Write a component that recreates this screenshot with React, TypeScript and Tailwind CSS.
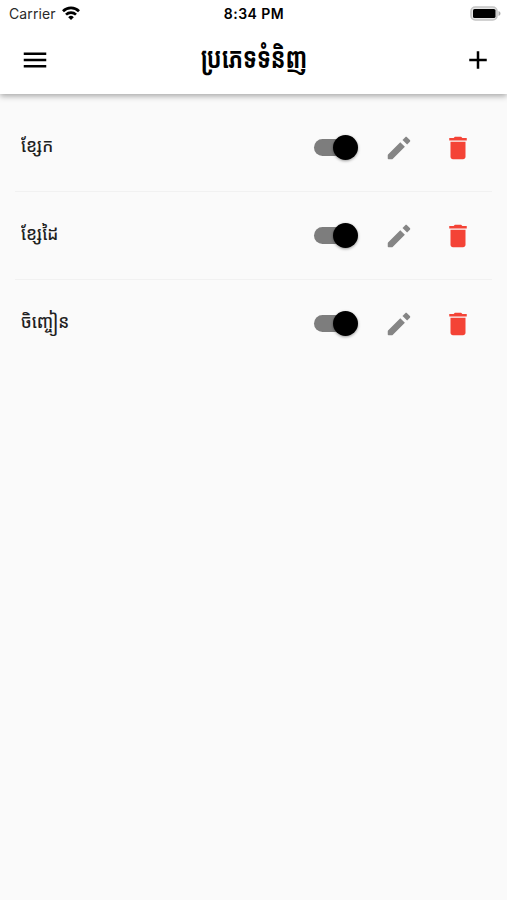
import { MdAdd, MdDelete, MdMenu } from "react-icons/md";

const categories = [
  { id: 1, name: "ខ្សែក" },
  { id: 2, name: "ខ្សែដៃ" },
  { id: 3, name: "ចិញ្ចៀន" },
] as const;

function StatusBar() {
  return (
    <div className="grid h-[27px] grid-cols-3 items-center pl-[9px] pr-[6px] font-[Inter,sans-serif] text-[14px] leading-none text-[#2a2a2a]">
      <div className="flex items-center gap-[6px]">
        <span className="tracking-[0.1px]">Carrier</span>
        <svg viewBox="0 0 18 14" className="-mt-[2px] h-[14px] w-[18px]" fill="none" stroke="#000" strokeWidth="2.7">
          <path d="M1 5.2a11.400 11.400 0 0 1 16 0" />
          <path d="M4 8.6a7.200 7.200 0 0 1 10 0" />
          <path d="M9 14 6.200 11.200a4 4 0 0 1 5.600 0z" fill="#000" stroke="none" />
        </svg>
      </div>
      <span className="-ml-[2px] text-center font-semibold tracking-[0.45px] text-black">8:34 PM</span>
      <svg viewBox="0 0 31 15" className="-mt-px h-[15px] w-[31px] justify-self-end">
        <rect x="1" y="1" width="26" height="13" rx="4.2" fill="#e6e6e6" stroke="#c4c4c4" strokeWidth="1.600" />
        <rect x="3" y="3" width="22.500" height="9" rx="1.6" fill="#000" />
        <path d="M28.500 5v5c1.200-.4 2-1.300 2-2.500s-.8-2.100-2-2.500z" fill="#aaa" />
      </svg>
    </div>
  );
}

function PencilIcon() {
  return (
    <svg viewBox="0 0 24 24" className="size-[30px] text-[#858585]" fill="currentColor">
      <path d="M3 17.700v2.700c0 .4.200.6.600.6h2.700c.2 0 .4-.1.600-.2L16.700 11l-3.700-3.700L3.200 17.100c-.1.200-.2.400-.2.600z" />
      <path d="M20.700 7c.400-.4.400-1 0-1.400l-2.300-2.300c-.4-.4-1-.4-1.400 0l-2.200 2.200 3.700 3.700z" />
    </svg>
  );
}

function Toggle() {
  return (
    <button role="switch" aria-checked="true" className="flex h-[25px] w-[44px] items-center">
      <span className="flex h-[17px] w-[41px] items-center rounded-full bg-[#7d7d7d]">
        <span className="ml-[19px] size-[25px] shrink-0 rounded-full bg-black shadow-[0_1px_3px_rgba(0,0,0,0.4)]" />
      </span>
    </button>
  );
}

export default function App() {
  return (
    <div className="min-h-screen bg-[#fafafa] font-['Noto_Sans_Khmer','DejaVu_Sans',sans-serif]">
      <header className="relative h-[94px] bg-white shadow-[0_2px_6px_0_rgba(0,0,0,0.35)]">
        <StatusBar />
        <div className="flex h-[65px] items-center justify-between pl-5 pr-[14px]">
          <button aria-label="Menu">
            <MdMenu className="size-[30px]" />
          </button>
          <h1 className="-mt-[6px] -ml-[4px] scale-x-[0.87] scale-y-[1.18] text-[25px] font-bold leading-none whitespace-nowrap text-black">
            ប្រភេទទំនិញ
          </h1>
          <button aria-label="Add">
            <MdAdd className="size-[30px]" />
          </button>
        </div>
      </header>

      <ul className="px-[15px] pt-[10px]">
        {categories.map((category) => (
          <li
            key={category.id}
            className="flex h-[88px] items-center border-b border-[#f1f1f1] pl-[6px] pr-[5px] last:border-transparent"
          >
            <span className="-mt-[6px] flex-1 origin-left scale-y-[1.1] text-[17px] font-medium leading-none text-[#1f1f1f]">
              {category.name}
            </span>
            <Toggle />
            <button aria-label="Edit" className="ml-[26px]">
              <PencilIcon />
            </button>
            <button aria-label="Delete" className="ml-[29px] mr-[14px]">
              <MdDelete className="size-[30px] text-[#f44336]" />
            </button>
          </li>
        ))}
      </ul>
    </div>
  );
}
